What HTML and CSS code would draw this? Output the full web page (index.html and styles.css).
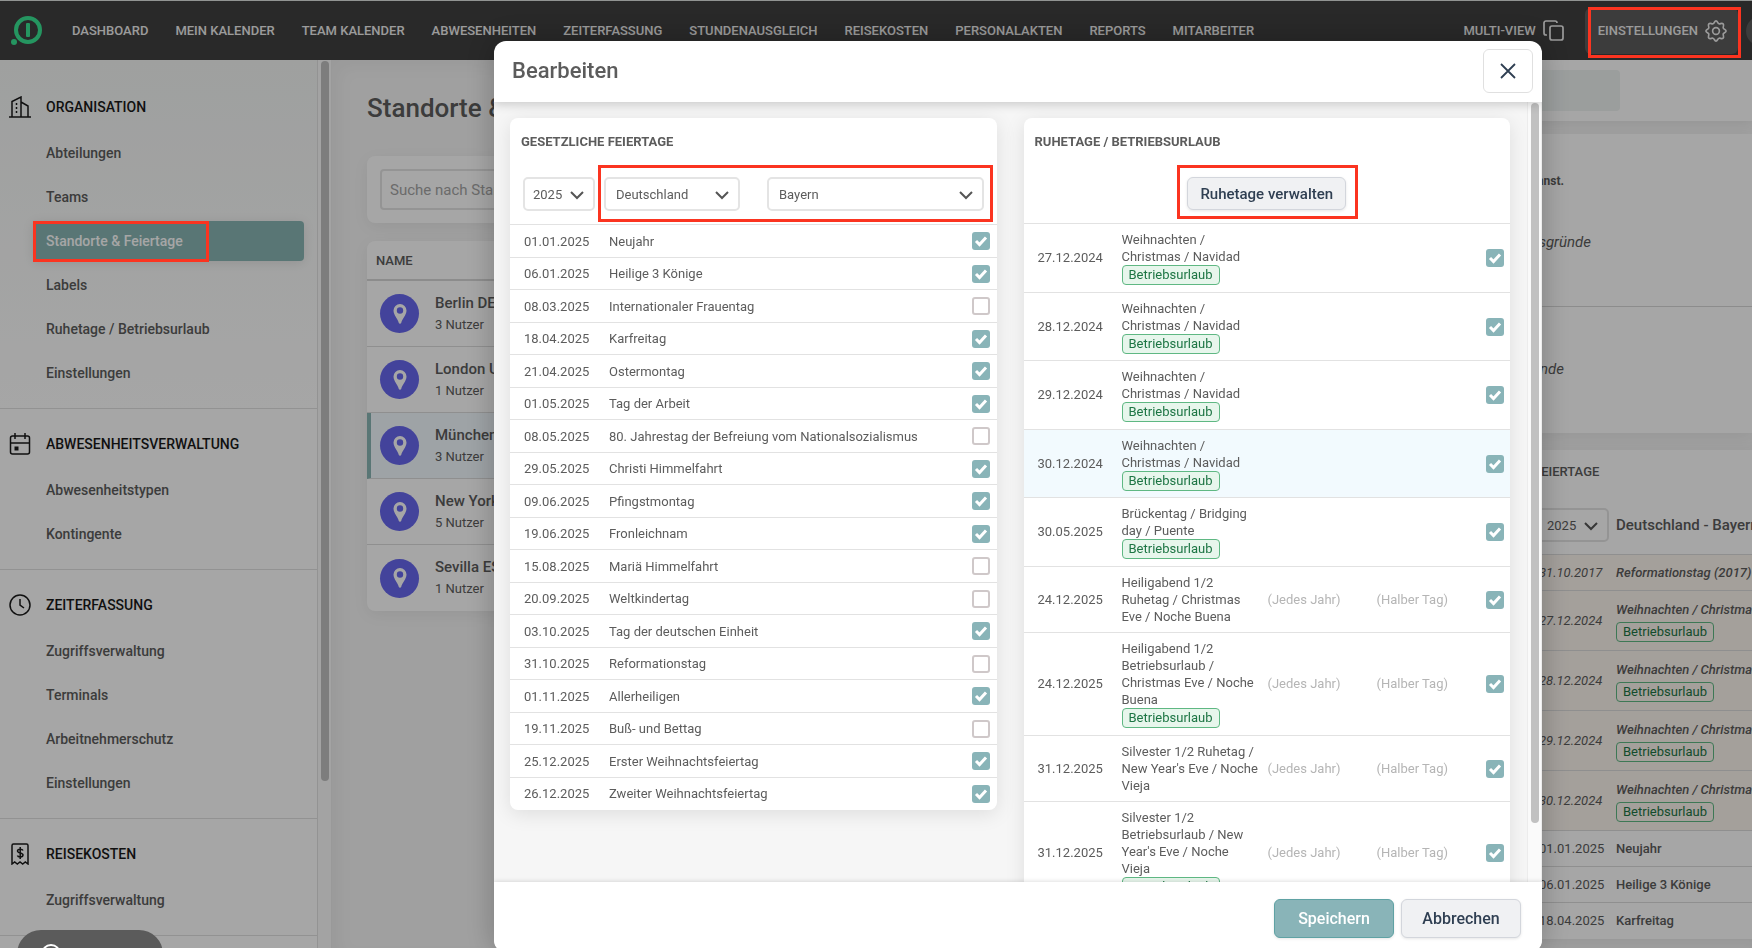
FILE: index.html
```html
<!DOCTYPE html>
<html lang="de">
  <head>
    <meta charset="UTF-8">
    <title>Standorte &amp; Feiertage</title>
    <link rel="stylesheet" href="styles.css">
  </head>
  <body>
    <header class="topbar">
      <svg class="logo" width="32" height="32" viewBox="0 0 32 32">
        <circle cx="18" cy="15" r="12" fill="none" stroke="currentColor" stroke-width="4"/>
        <rect x="16" y="8" width="4" height="14" rx="1" fill="currentColor"/>
        <circle cx="4" cy="27" r="3" fill="currentColor"/>
      </svg>
      <nav class="mainnav">
        <a href="#">DASHBOARD</a>
        <a href="#">MEIN KALENDER</a>
        <a href="#">TEAM KALENDER</a>
        <a href="#">ABWESENHEITEN</a>
        <a href="#">ZEITERFASSUNG</a>
        <a href="#">STUNDENAUSGLEICH</a>
        <a href="#">REISEKOSTEN</a>
        <a href="#">PERSONALAKTEN</a>
        <a href="#">REPORTS</a>
        <a href="#">MITARBEITER</a>
      </nav>
      <div class="tools">
        <a class="multiview" href="#">MULTI-VIEW
          <svg width="22" height="22" viewBox="0 0 22 22" fill="none" stroke="currentColor" stroke-width="1.7">
            <rect x="7" y="6" width="13" height="14" rx="2"/>
            <path d="M4 15H3a2 2 0 0 1-2-2V3a2 2 0 0 1 2-2h9a2 2 0 0 1 2 2"/>
          </svg>
        </a>
        <a class="settings" href="#">EINSTELLUNGEN
          <svg width="22" height="22" viewBox="0 0 24 24" fill="none" stroke="currentColor" stroke-width="1.8">
            <path d="M8.700 4.100C10 4.100 10.300 1 12 1S14 4.100 15.300 4.100C16.500 4.600 18.400 2.800 19.800 4.200S19.400 7.500 19.900 8.700C19.900 10 23 10.300 23 12S19.900 14 19.900 15.300C19.400 16.500 21.200 18.400 19.800 19.800S16.500 19.400 15.300 19.900C14 19.900 13.700 23 12 23S10 19.900 8.700 19.900C7.500 19.400 5.600 21.200 4.200 19.800S4.600 16.500 4.100 15.300C4.100 14 1 13.700 1 12S4.100 10 4.100 8.700C4.600 7.500 2.800 5.600 4.200 4.200S7.500 4.600 8.700 4.100z"/>
            <circle cx="12" cy="12" r="3.7"/>
          </svg>
          <span class="mark mark-settings"></span>
        </a>
        <span class="avatar"></span>
      </div>
    </header>

    <div class="page">
      <aside class="sidebar">
        <section>
          <h2>
            <svg width="22" height="22" viewBox="0 0 22 22" fill="none" stroke="currentColor" stroke-width="1.500">
              <path d="M0 21h22M3 21V5.500L12 1v20M12 6l7 4v11"/>
              <path d="M7.500 7v12" stroke-dasharray="2 2"/>
            </svg>
            ORGANISATION
          </h2>
          <a href="#">Abteilungen</a>
          <a href="#">Teams</a>
          <a class="active" href="#">Standorte &amp; Feiertage<span class="mark mark-nav"></span></a>
          <a href="#">Labels</a>
          <a href="#">Ruhetage / Betriebsurlaub</a>
          <a href="#">Einstellungen</a>
        </section>
        <section>
          <h2>
            <svg width="22" height="22" viewBox="0 0 22 22" fill="none" stroke="currentColor" stroke-width="1.500">
              <rect x="1.500" y="3" width="19" height="18" rx="2"/>
              <path d="M1.500 10h19M6 0v6M16 0v6"/>
              <rect x="6" y="14" width="3" height="3" fill="currentColor" stroke-width="1"/>
            </svg>
            ABWESENHEITSVERWALTUNG
          </h2>
          <a href="#">Abwesenheitstypen</a>
          <a href="#">Kontingente</a>
        </section>
        <section>
          <h2>
            <svg width="22" height="22" viewBox="0 0 22 22" fill="none" stroke="currentColor" stroke-width="1.500">
              <circle cx="11" cy="11" r="10"/>
              <path d="M11 5v6l4 3"/>
            </svg>
            ZEITERFASSUNG
          </h2>
          <a href="#">Zugriffsverwaltung</a>
          <a href="#">Terminals</a>
          <a href="#">Arbeitnehmerschutz</a>
          <a href="#">Einstellungen</a>
        </section>
        <section>
          <h2>
            <svg width="22" height="22" viewBox="0 0 22 22" fill="none" stroke="currentColor" stroke-width="1.500">
              <path d="M3 21V2.500A1.500 1.500 0 0 1 4.500 1h13A1.500 1.500 0 0 1 19 2.500V21l-2.700-2-2.600 2L11 19l-2.700 2-2.600-2z"/>
              <path d="M14 7.500C13.500 6 8.500 5.500 8.500 8s5.500 1.500 5.500 4-5 2.500-5.500.5M11.200 4v12"/>
            </svg>
            REISEKOSTEN
          </h2>
          <a href="#">Zugriffsverwaltung</a>
        </section>
      </aside>
      <div class="track"><div class="thumb"></div></div>

      <main class="content">
        <div class="places">
          <h1>Standorte &amp; Feiertage</h1>
          <div class="card search">
            <input type="text" placeholder="Suche nach Standort" aria-label="Suche nach Standort">
          </div>
          <div class="card list">
            <div class="list-head">NAME</div>
            <a class="place" href="#">
              <span class="pin"><svg width="14" height="20" viewBox="0 0 14 20"><path fill="#fff" fill-rule="evenodd" d="M7 0a6.500 6.500 0 0 0-6.500 6.500C.5 11 5 15 5.800 19c.3 1 2.100 1 2.400 0C9 15 13.500 11 13.500 6.500A6.500 6.500 0 0 0 7 0zm0 3.300a3.200 3.200 0 1 1 0 6.400 3.200 3.200 0 0 1 0-6.400z"/></svg></span>
              <span><b>Berlin DE</b><small>3 Nutzer</small></span>
            </a>
            <a class="place" href="#">
              <span class="pin"><svg width="14" height="20" viewBox="0 0 14 20"><path fill="#fff" fill-rule="evenodd" d="M7 0a6.500 6.500 0 0 0-6.500 6.500C.5 11 5 15 5.800 19c.3 1 2.100 1 2.400 0C9 15 13.500 11 13.500 6.500A6.500 6.500 0 0 0 7 0zm0 3.300a3.200 3.200 0 1 1 0 6.400 3.200 3.200 0 0 1 0-6.400z"/></svg></span>
              <span><b>London UK</b><small>1 Nutzer</small></span>
            </a>
            <a class="place selected" href="#">
              <span class="pin"><svg width="14" height="20" viewBox="0 0 14 20"><path fill="#fff" fill-rule="evenodd" d="M7 0a6.500 6.500 0 0 0-6.500 6.500C.5 11 5 15 5.800 19c.3 1 2.100 1 2.400 0C9 15 13.500 11 13.500 6.500A6.500 6.500 0 0 0 7 0zm0 3.300a3.200 3.200 0 1 1 0 6.400 3.200 3.200 0 0 1 0-6.400z"/></svg></span>
              <span><b>München DE</b><small>3 Nutzer</small></span>
            </a>
            <a class="place" href="#">
              <span class="pin"><svg width="14" height="20" viewBox="0 0 14 20"><path fill="#fff" fill-rule="evenodd" d="M7 0a6.500 6.500 0 0 0-6.500 6.500C.5 11 5 15 5.800 19c.3 1 2.100 1 2.400 0C9 15 13.500 11 13.500 6.500A6.500 6.500 0 0 0 7 0zm0 3.300a3.200 3.200 0 1 1 0 6.400 3.200 3.200 0 0 1 0-6.400z"/></svg></span>
              <span><b>New York US</b><small>5 Nutzer</small></span>
            </a>
            <a class="place" href="#">
              <span class="pin"><svg width="14" height="20" viewBox="0 0 14 20"><path fill="#fff" fill-rule="evenodd" d="M7 0a6.500 6.500 0 0 0-6.500 6.500C.5 11 5 15 5.800 19c.3 1 2.100 1 2.400 0C9 15 13.500 11 13.500 6.500A6.500 6.500 0 0 0 7 0zm0 3.300a3.200 3.200 0 1 1 0 6.400 3.200 3.200 0 0 1 0-6.400z"/></svg></span>
              <span><b>Sevilla ES</b><small>1 Nutzer</small></span>
            </a>
          </div>
        </div>

        <div class="detail">
          <div class="detail-head"><span class="detail-tab"></span></div>
          <div class="card reasons">
            <p class="hint">kannst.</p>
            <p class="reason long">Betriebsgründe</p>
            <p class="reason">Gründe</p>
          </div>
          <div class="card holidays">
            <h3>FEIERTAGE</h3>
            <div class="holidays-bar">
              <label class="select">
                <select aria-label="Jahr"><option>2025</option></select>
                <svg width="14" height="9" viewBox="0 0 14 9"><path d="M1 1l6 6 6-6"/></svg>
              </label>
              <strong>Deutschland - Bayern</strong>
            </div>
            <table>
              <tr class="past short"><td>31.10.2017</td><th>Reformationstag (2017)</th></tr>
              <tr class="past"><td>27.12.2024</td><th>Weihnachten / Christmas / Navidad<br><span class="badge">Betriebsurlaub</span></th></tr>
              <tr class="past"><td>28.12.2024</td><th>Weihnachten / Christmas / Navidad<br><span class="badge">Betriebsurlaub</span></th></tr>
              <tr class="past"><td>29.12.2024</td><th>Weihnachten / Christmas / Navidad<br><span class="badge">Betriebsurlaub</span></th></tr>
              <tr class="past"><td>30.12.2024</td><th>Weihnachten / Christmas / Navidad<br><span class="badge">Betriebsurlaub</span></th></tr>
              <tr><td>01.01.2025</td><th>Neujahr</th></tr>
              <tr><td>06.01.2025</td><th>Heilige 3 Könige</th></tr>
              <tr><td>18.04.2025</td><th>Karfreitag</th></tr>
            </table>
          </div>
        </div>
      </main>
    </div>

    <div class="overlay">
      <div class="modal" role="dialog" aria-labelledby="modal-title">
        <div class="modal-head">
          <h2 id="modal-title">Bearbeiten</h2>
          <button class="close" aria-label="Schließen">
            <svg width="16" height="16" viewBox="0 0 16 16"><path d="M1 1l14 14M15 1L1 15" stroke="currentColor" stroke-width="1.8"/></svg>
          </button>
        </div>

        <div class="modal-body">
          <div class="columns">
            <div class="panel public">
              <h3>GESETZLICHE FEIERTAGE</h3>
              <div class="filters">
                <label class="select">
                  <select aria-label="Jahr"><option>2025</option></select>
                  <svg width="14" height="9" viewBox="0 0 14 9"><path d="M1 1l6 6 6-6"/></svg>
                </label>
                <div class="region">
                  <label class="select country">
                    <select aria-label="Land"><option>Deutschland</option></select>
                    <svg width="14" height="9" viewBox="0 0 14 9"><path d="M1 1l6 6 6-6"/></svg>
                  </label>
                  <label class="select state">
                    <select aria-label="Bundesland"><option>Bayern</option></select>
                    <svg width="14" height="9" viewBox="0 0 14 9"><path d="M1 1l6 6 6-6"/></svg>
                  </label>
                  <span class="mark mark-region"></span>
                </div>
              </div>
              <table>
                <tr><td>01.01.2025</td><td><label for="p1">Neujahr</label></td><td><input type="checkbox" id="p1" checked></td></tr>
                <tr><td>06.01.2025</td><td><label for="p2">Heilige 3 Könige</label></td><td><input type="checkbox" id="p2" checked></td></tr>
                <tr><td>08.03.2025</td><td><label for="p3">Internationaler Frauentag</label></td><td><input type="checkbox" id="p3"></td></tr>
                <tr><td>18.04.2025</td><td><label for="p4">Karfreitag</label></td><td><input type="checkbox" id="p4" checked></td></tr>
                <tr><td>21.04.2025</td><td><label for="p5">Ostermontag</label></td><td><input type="checkbox" id="p5" checked></td></tr>
                <tr><td>01.05.2025</td><td><label for="p6">Tag der Arbeit</label></td><td><input type="checkbox" id="p6" checked></td></tr>
                <tr><td>08.05.2025</td><td><label for="p7">80. Jahrestag der Befreiung vom Nationalsozialismus</label></td><td><input type="checkbox" id="p7"></td></tr>
                <tr><td>29.05.2025</td><td><label for="p8">Christi Himmelfahrt</label></td><td><input type="checkbox" id="p8" checked></td></tr>
                <tr><td>09.06.2025</td><td><label for="p9">Pfingstmontag</label></td><td><input type="checkbox" id="p9" checked></td></tr>
                <tr><td>19.06.2025</td><td><label for="p10">Fronleichnam</label></td><td><input type="checkbox" id="p10" checked></td></tr>
                <tr><td>15.08.2025</td><td><label for="p11">Mariä Himmelfahrt</label></td><td><input type="checkbox" id="p11"></td></tr>
                <tr><td>20.09.2025</td><td><label for="p12">Weltkindertag</label></td><td><input type="checkbox" id="p12"></td></tr>
                <tr><td>03.10.2025</td><td><label for="p13">Tag der deutschen Einheit</label></td><td><input type="checkbox" id="p13" checked></td></tr>
                <tr><td>31.10.2025</td><td><label for="p14">Reformationstag</label></td><td><input type="checkbox" id="p14"></td></tr>
                <tr><td>01.11.2025</td><td><label for="p15">Allerheiligen</label></td><td><input type="checkbox" id="p15" checked></td></tr>
                <tr><td>19.11.2025</td><td><label for="p16">Buß- und Bettag</label></td><td><input type="checkbox" id="p16"></td></tr>
                <tr><td>25.12.2025</td><td><label for="p17">Erster Weihnachtsfeiertag</label></td><td><input type="checkbox" id="p17" checked></td></tr>
                <tr><td>26.12.2025</td><td><label for="p18">Zweiter Weihnachtsfeiertag</label></td><td><input type="checkbox" id="p18" checked></td></tr>
              </table>
            </div>

            <div class="panel company">
              <h3>RUHETAGE / BETRIEBSURLAUB</h3>
              <div class="manage">
                <button class="btn">Ruhetage verwalten<span class="mark mark-manage"></span></button>
              </div>
              <table>
                <tr><td>27.12.2024</td><td><label for="c1">Weihnachten / Christmas / Navidad</label><span class="badge">Betriebsurlaub</span></td><td></td><td></td><td><input type="checkbox" id="c1" checked></td></tr>
                <tr><td>28.12.2024</td><td><label for="c2">Weihnachten / Christmas / Navidad</label><span class="badge">Betriebsurlaub</span></td><td></td><td></td><td><input type="checkbox" id="c2" checked></td></tr>
                <tr><td>29.12.2024</td><td><label for="c3">Weihnachten / Christmas / Navidad</label><span class="badge">Betriebsurlaub</span></td><td></td><td></td><td><input type="checkbox" id="c3" checked></td></tr>
                <tr class="hover"><td>30.12.2024</td><td><label for="c4">Weihnachten / Christmas / Navidad</label><span class="badge">Betriebsurlaub</span></td><td></td><td></td><td><input type="checkbox" id="c4" checked></td></tr>
                <tr><td>30.05.2025</td><td><label for="c5">Brückentag / Bridging day / Puente</label><span class="badge">Betriebsurlaub</span></td><td></td><td></td><td><input type="checkbox" id="c5" checked></td></tr>
                <tr><td>24.12.2025</td><td><label for="c6">Heiligabend 1/2 Ruhetag / Christmas Eve / Noche Buena</label></td><td>(Jedes Jahr)</td><td>(Halber Tag)</td><td><input type="checkbox" id="c6" checked></td></tr>
                <tr><td>24.12.2025</td><td><label for="c7">Heiligabend 1/2 Betriebsurlaub / Christmas Eve / Noche Buena</label><span class="badge">Betriebsurlaub</span></td><td>(Jedes Jahr)</td><td>(Halber Tag)</td><td><input type="checkbox" id="c7" checked></td></tr>
                <tr><td>31.12.2025</td><td><label for="c8">Silvester 1/2 Ruhetag / New Year's Eve / Noche Vieja</label></td><td>(Jedes Jahr)</td><td>(Halber Tag)</td><td><input type="checkbox" id="c8" checked></td></tr>
                <tr><td>31.12.2025</td><td><label for="c9">Silvester 1/2 Betriebsurlaub / New Year's Eve / Noche Vieja</label><span class="badge">Betriebsurlaub</span></td><td>(Jedes Jahr)</td><td>(Halber Tag)</td><td><input type="checkbox" id="c9" checked></td></tr>
              </table>
            </div>
          </div>
          <div class="track"><div class="thumb"></div></div>
        </div>

        <div class="modal-foot">
          <button class="btn primary">Speichern</button>
          <button class="btn">Abbrechen</button>
        </div>
      </div>
    </div>

    <button class="help" aria-label="Hilfe">
      <svg width="20" height="20" viewBox="0 0 20 20" fill="none" stroke="#fff" stroke-width="2"><circle cx="10" cy="10" r="9"/></svg>
    </button>
  </body>
</html>
```

FILE: styles.css
```css
* {
  box-sizing: border-box;
}

body {
  margin: 0;
  height: 100vh;
  overflow: hidden;
  display: flex;
  flex-direction: column;
  border-top: 1px solid #dfe3e1;
  background: #fff;
  color: #5c5c5c;
  font-family: Roboto, sans-serif;
  font-size: 13px;
}

a {
  color: inherit;
  text-decoration: none;
}

h1, h2, h3, p {
  margin: 0;
}

h1, h2 {
  font-weight: 500;
}

button, input, select {
  font: inherit;
  color: inherit;
}

table {
  width: 100%;
  border-collapse: collapse;
}

/* top bar */
.topbar {
  flex: none;
  display: flex;
  align-items: center;
  height: 59px;
  padding-left: 10px;
  overflow: hidden;
  background: #3f3f3f;
  color: #eee;
  font-weight: 500;
}

.logo {
  color: #39e594;
}

.mainnav {
  display: flex;
  gap: 27px;
  margin-left: 30px;
}

.tools {
  display: flex;
  align-items: center;
  margin-left: auto;
  margin-right: -24px;
}

.multiview, .settings {
  display: flex;
  align-items: center;
  gap: 7px;
}

.settings {
  position: relative;
  height: 46px;
  margin: 0 8px 0 20px;
  padding: 0 11px 0 13px;
  border-radius: 6px;
  background: #5c5c5c;
}

.avatar {
  width: 30px;
  height: 30px;
  border-radius: 50%;
  background: #5c5c5c;
}

/* red highlight frames */
.mark {
  position: absolute;
  z-index: 20;
  border: 3px solid #fb3420;
}

.mark-settings {
  inset: -1px -3px -4px 3px;
}

.mark-nav {
  top: 0;
  left: 0;
  width: 176px;
  height: 41px;
}

.mark-region {
  inset: -12px -9px -11px -6px;
}

.mark-manage {
  inset: -13px -13px -10px -11px;
}

/* page behind the dialog */
.page {
  flex: 1;
  min-height: 0;
  display: flex;
}

.sidebar {
  flex: none;
  width: 318px;
  padding-top: 12px;
  border-right: 1px solid #e2e2e2;
  overflow: hidden;
  background: linear-gradient(#f4f6f5, #fff 350px);
  font-size: 14px;
  font-weight: 500;
}

.sidebar section {
  display: flex;
  flex-direction: column;
  gap: 4px;
  padding: 23px 13px 15px 33px;
  border-bottom: 1px solid #e0e0e0;
}

.sidebar h2 {
  display: flex;
  align-items: center;
  gap: 15px;
  height: 24px;
  margin: 0 0 10px -24px;
  color: #1a1a1a;
  font-size: 14px;
}

.sidebar a {
  position: relative;
  padding-left: 13px;
  border-radius: 4px;
  line-height: 40px;
}

.sidebar .active {
  background: #89b6b4;
  color: #fff;
  box-shadow: 0 2px 12px rgba(0, 0, 0, 0.1);
}

.track {
  flex: none;
  width: 14px;
  padding: 1px 3px;
  border-right: 1px solid #ececec;
  background: #fafafa;
}

.thumb {
  width: 8px;
  height: 720px;
  border-radius: 4px;
  background: #c1c1c1;
}

.content {
  flex: 1;
  min-width: 0;
  display: flex;
  background: #f6f6f6;
  box-shadow: inset 8px 8px 16px rgba(0, 0, 0, 0.04);
}

.places {
  flex: 1;
  padding: 31px 35px;
}

.places h1 {
  margin-bottom: 30px;
  font-size: 26px;
  line-height: 35px;
}

.card {
  border-radius: 8px;
  background: #fff;
  box-shadow: 0 4px 16px rgba(0, 0, 0, 0.06);
}

.search {
  padding: 13px;
}

.search input {
  width: 100%;
  height: 41px;
  padding: 0 8px;
  border: 2px solid #e4e4e4;
  border-radius: 4px;
  font-size: 15px;
}

.search input::placeholder {
  color: #a5a5a5;
}

.list {
  margin-top: 18px;
  overflow: hidden;
}

.list-head {
  height: 40px;
  padding-left: 9px;
  border-bottom: 2px solid #d8d8d8;
  font-weight: 500;
  line-height: 40px;
}

.place {
  display: flex;
  align-items: center;
  gap: 16px;
  height: 66px;
  padding-left: 13px;
  border-bottom: 1px solid #dcdcdc;
}

.place:last-child {
  border-bottom: 0;
}

.selected {
  padding-left: 9px;
  border-left: 4px solid #89b6b4;
  background: #f3faff;
}

.pin {
  display: flex;
  align-items: center;
  justify-content: center;
  width: 39px;
  height: 39px;
  border-radius: 50%;
  background: #6767ee;
}

.place b, .place small {
  display: block;
  line-height: 21px;
}

.place b {
  font-size: 15px;
  font-weight: 500;
}

.place small {
  font-size: 13px;
}

.detail {
  flex: none;
  width: 728px;
  overflow: hidden;
}

.detail-head {
  height: 61px;
  padding: 10px 0;
  background: #fff;
  box-shadow: 0 2px 12px rgba(0, 0, 0, 0.08);
}

.detail-tab {
  display: block;
  width: 596px;
  height: 41px;
  border-radius: 4px;
  background: #eef3f2;
}

.reasons {
  height: 299px;
  margin: 13px 0 17px;
  padding-top: 39px;
  border-radius: 0;
}

.hint, .reason {
  width: 540px;
  line-height: 16px;
  text-align: right;
}

.hint {
  margin-bottom: 45px;
  font-size: 12px;
  font-weight: 700;
}

.reason {
  font-size: 15px;
  font-style: italic;
}

.long {
  width: 567px;
}

.reasons .reason:last-child {
  width: 100%;
  margin-top: 56px;
  padding: 54px 188px 0 0;
  border-top: 1px solid #d8d8d8;
}

.holidays {
  width: 300px;
  margin-left: 500px;
  border-radius: 8px 0 0 0;
}

.holidays h3 {
  padding: 14px 10px;
  font-size: 13px;
  font-weight: 500;
  line-height: 16px;
}

.holidays-bar {
  display: flex;
  align-items: center;
  gap: 7px;
  padding: 14px 13px 12px;
  white-space: nowrap;
}

.holidays-bar strong {
  font-size: 15px;
  font-weight: 500;
}

.holidays td, .holidays th {
  height: 36px;
  padding: 0;
  border-top: 1px solid #dcdcdc;
  text-align: left;
  white-space: nowrap;
}

.holidays td {
  width: 92px;
  padding-left: 15px;
}

.holidays th {
  font-weight: 500;
  line-height: 22px;
}

.holidays .past td, .holidays .past th {
  height: 60px;
  background: #fcf6ef;
  font-style: italic;
}

.holidays .short td, .holidays .short th {
  height: 36px;
}

.badge {
  display: inline-block;
  height: 20px;
  padding: 0 6px;
  border: 1px solid #5fb883;
  border-radius: 4px;
  background: #e7f6ec;
  color: #1d7544;
  font-size: 13px;
  font-style: normal;
  font-weight: 400;
  line-height: 18px;
}

.holidays .badge {
  background: transparent;
}

/* dialog */
.overlay {
  position: fixed;
  inset: 0;
  z-index: 10;
  display: flex;
  padding: 41px 210px 0 494px;
  background: rgba(0, 0, 0, 0.35);
}

.modal {
  flex: 1;
  min-width: 0;
  height: 911px;
  display: flex;
  flex-direction: column;
  overflow: hidden;
  border-radius: 12px;
  background: #fff;
  box-shadow: 0 0 30px rgba(0, 0, 0, 0.25);
}

.modal-head {
  position: relative;
  flex: none;
  display: flex;
  align-items: center;
  justify-content: space-between;
  height: 61px;
  padding: 0 9px 2px 18px;
  box-shadow: 0 2px 10px rgba(0, 0, 0, 0.2);
}

.modal-head h2 {
  font-size: 22px;
}

.close {
  display: flex;
  align-items: center;
  justify-content: center;
  width: 50px;
  height: 44px;
  border: 1px solid #e0e0e0;
  border-radius: 6px;
  background: #fff;
  color: #2f3f52;
}

.modal-body {
  flex: 1;
  min-height: 0;
  display: flex;
  background: #f6f6f6;
}

.modal-body .track {
  width: 15px;
  border-left: 1px solid #ececec;
}

.columns {
  flex: 1;
  display: flex;
  align-items: flex-start;
  gap: 27px;
  padding: 16px 17px 0 16px;
  overflow: hidden;
}

.panel {
  flex: 1;
  border-radius: 8px;
  background: #fff;
  box-shadow: 0 4px 20px rgba(0, 0, 0, 0.1);
}

.panel h3 {
  padding: 16px 11px 0;
  font-size: 13px;
  font-weight: 700;
  line-height: 16px;
}

.filters {
  display: flex;
  gap: 9px;
  padding: 27px 13px 13px;
}

.region {
  position: relative;
  flex: 1;
  display: flex;
  gap: 27px;
}

.select {
  position: relative;
  width: 72px;
}

.select select {
  width: 100%;
  height: 34px;
  padding: 0 8px;
  appearance: none;
  border: 2px solid #e4e4e4;
  border-radius: 5px;
  background: transparent;
}

.select svg {
  position: absolute;
  top: 14px;
  right: 11px;
  fill: none;
  stroke: #555;
  stroke-width: 2;
}

.country {
  width: 136px;
}

.state {
  flex: 1;
}

.country select, .state select {
  padding: 0 10px;
}

.manage {
  display: flex;
  justify-content: center;
  padding: 27px 0 13px;
}

.btn {
  position: relative;
  height: 33px;
  padding: 0 12px;
  border: 1px solid #d3d6dc;
  border-radius: 6px;
  background: #f0f1f3;
  color: #2f3f52;
  font-size: 15px;
  font-weight: 500;
  box-shadow: 0 1px 3px rgba(0, 0, 0, 0.1);
}

.panel td {
  padding: 0;
  border-top: 1px solid #e2e2e2;
}

.public td {
  height: 33px;
}

.public tr:nth-child(even) td {
  height: 32px;
}

.public td:first-child {
  width: 99px;
  padding-left: 14px;
}

.public td:last-child {
  width: 25px;
}

.company table {
  table-layout: fixed;
}

.company td {
  padding: 7px 0 8px;
  line-height: 17px;
}

.company tr:nth-child(even) td {
  padding-bottom: 7px;
}

.company td:first-child {
  width: 98px;
  padding-left: 14px;
}

.company td:nth-child(2) {
  width: 146px;
  padding-right: 8px;
}

.company td:nth-child(3) {
  width: 109px;
  color: #b5b5b5;
}

.company td:nth-child(4) {
  color: #b5b5b5;
}

.company td:last-child {
  width: 24px;
}

.company label {
  display: block;
}

.company .badge {
  display: block;
  width: fit-content;
  margin-bottom: -1px;
}

.company .hover {
  background: #f2fafe;
}

input[type="checkbox"] {
  display: block;
  width: 18px;
  height: 18px;
  margin: 0;
  appearance: none;
  border: 2px solid #cfc8c9;
  border-radius: 3px;
  background: #fff;
}

input[type="checkbox"]:checked {
  border: 0;
  background: #89b4b8 url("data:image/svg+xml,%3Csvg xmlns='http://www.w3.org/2000/svg' viewBox='0 0 18 18'%3E%3Cpath d='M4 9l3.500 3.500L14 5.500' fill='none' stroke='%23fff' stroke-width='3'/%3E%3C/svg%3E");
}

.modal-foot {
  position: relative;
  flex: none;
  display: flex;
  justify-content: flex-end;
  gap: 7px;
  height: 70px;
  padding: 17px 21px 0;
  background: #fff;
  box-shadow: 0 -1px 4px rgba(0, 0, 0, 0.12);
}

.modal-foot .btn {
  width: 120px;
  height: 39px;
  font-size: 16px;
}

.primary {
  border-color: #5fa2a4;
  background: #89b4b8;
  color: #fff;
}

/* help launcher, bottom left */
.help {
  position: fixed;
  left: 17px;
  bottom: -30px;
  z-index: 30;
  width: 146px;
  height: 48px;
  padding: 14px 24px;
  border: 0;
  border-radius: 24px;
  background: #5b5b5b;
  text-align: left;
}
```
